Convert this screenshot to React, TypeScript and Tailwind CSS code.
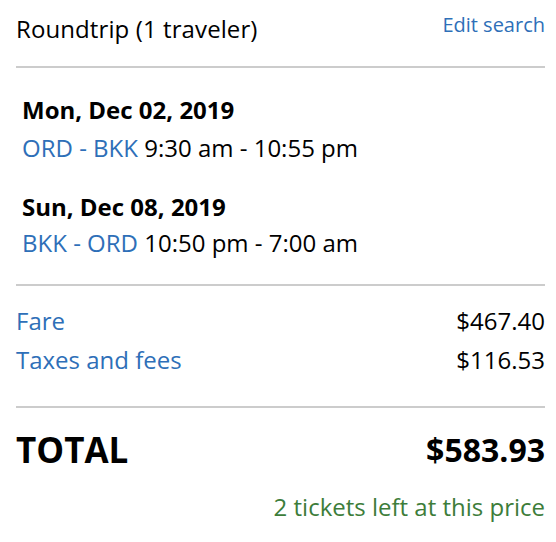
export default function App() {
  return (
    <div
      className="w-[556px] h-[542px] bg-white pl-[16px] pr-[11px] text-black"
      style={{ fontFamily: "'Open Sans', sans-serif" }}
    >
      {/* Header */}
      <div className="flex items-start justify-between pt-[10px] pb-[21px]">
        <div className="mt-[3px] text-[24px] leading-[32px] tracking-[0.1px]">Roundtrip (1 traveler)</div>
        <a className="mt-[1px] text-[20px] leading-[27px] text-[#2e6fb8]">Edit search</a>
      </div>
      <div className="h-[2px] bg-[#cccccc]" />

      {/* Flights */}
      <div className="pl-[6px] pt-[26px] pb-[25px] text-[24px] leading-[32px]">
        <div className="font-bold">Mon, Dec 02, 2019</div>
        <div className="mt-[6px]">
          <span className="text-[#2e6fb8]">ORD - BKK</span> 9:30 am - 10:55 pm
        </div>
        <div className="mt-[27px] font-bold">Sun, Dec 08, 2019</div>
        <div className="mt-[4px]">
          <span className="text-[#2e6fb8]">BKK - ORD</span> 10:50 pm - 7:00 am
        </div>
      </div>
      <div className="h-[2px] bg-[#cccccc]" />

      {/* Fare breakdown */}
      <div className="flex flex-col gap-[7px] pt-[19px] pb-[30px] text-[24px] leading-[32px]">
        <div className="flex justify-between">
          <span className="text-[#2e6fb8]">Fare</span>
          <span>$467.40</span>
        </div>
        <div className="flex justify-between">
          <span className="text-[#2e6fb8]">Taxes and fees</span>
          <span>$116.53</span>
        </div>
      </div>
      <div className="h-[2px] bg-[#cccccc]" />

      {/* Total */}
      <div className="flex items-center justify-between pt-[20px]">
        <span className="text-[35px] leading-[44px] font-bold">TOTAL</span>
        <span className="text-[32px] leading-[44px] font-bold">$583.93</span>
      </div>
      <div className="mt-[19px] text-right text-[24px] leading-[32px] text-[#3d7d3a]">
        2 tickets left at this price
      </div>
    </div>
  );
}
